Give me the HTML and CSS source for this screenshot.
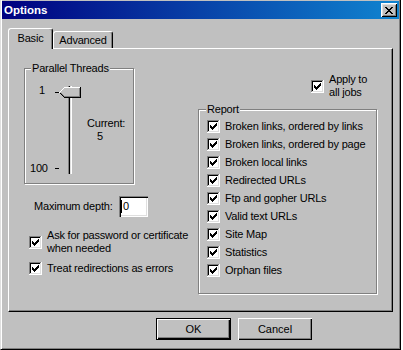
FILE: index.html
```html
<!DOCTYPE html>
<html lang="en">

<head>
    <meta charset="UTF-8">
    <title>Options</title>
    <link rel="stylesheet" href="styles.css">
</head>

<body>
    <!-- shared checkbox picture -->
    <svg class="defs">
        <symbol id="checkbox" viewBox="0 0 13 13">
            <path d="M0 0h12v1H1v11H0z" fill="#808080" />
            <path d="M1 1h10v1H2v9H1z" fill="#000" />
            <path d="M12 0h1v13H0v-1h12z" fill="#fff" />
            <path d="M11 1h1v11H1v-1h10z" fill="#dfdfdf" />
            <path d="M2 2h9v9H2z" fill="#fff" />
            <path d="M3 5h1v3H3zM4 6h1v3H4zM5 7h1v3H5zM6 6h1v3H6zM7 5h1v3H7zM8 4h1v3H8zM9 3h1v3H9z" fill="#000" />
        </symbol>
    </svg>

    <div class="window">
        <div class="titlebar">
            <span class="title">Options</span>
            <span class="close-btn">
                <svg width="8" height="7" viewBox="0 0 8 7" shape-rendering="crispEdges">
                    <path d="M0 0h2v1H0zM6 0h2v1H6zM1 1h2v1H1zM5 1h2v1H5zM2 2h4v1H2zM3 3h2v1H3zM2 4h4v1H2zM1 5h2v1H1zM5 5h2v1H5zM0 6h2v1H0zM6 6h2v1H6z" fill="#000" />
                </svg>
            </span>
        </div>

        <div class="tabs">
            <div class="tab tab-active">Basic</div>
            <div class="tab">Advanced</div>
        </div>

        <div class="panel">
            <div class="col-left">
                <div class="group threads">
                    <div class="group-title">Parallel Threads</div>
                    <div class="slider-row">
                        <div class="scale">
                            <span class="scale-min">1</span>
                            <span>100</span>
                        </div>
                        <svg class="slider" width="30" height="92" viewBox="0 0 30 92" shape-rendering="crispEdges">
                            <rect x="2" y="8" width="4" height="1" fill="#000" />
                            <rect x="2" y="84" width="4" height="1" fill="#000" />
                            <rect x="15" y="2" width="1" height="88" fill="#808080" />
                            <rect x="16" y="2" width="1" height="88" fill="#000" />
                            <rect x="17" y="2" width="1" height="88" fill="#dfdfdf" />
                            <rect x="18" y="2" width="1" height="88" fill="#fff" />
                            <path d="M11 3H28V14H11V13H10V12H9V11H8V10H7V9H6V8H7V7H8V6H9V5H10V4H11Z" fill="#c0c0c0" />
                            <path d="M6 8h1v1H6zM7 7h1v1H7zM8 6h1v1H8zM9 5h1v1H9zM10 4h1v1h-1zM11 3h16v1H11z" fill="#fff" />
                            <path d="M26 4h1v8h-1zM11 12h16v1H11zM8 9h1v1H8zM9 10h1v1H9zM10 11h1v1h-1z" fill="#808080" />
                            <path d="M27 3h1v11h-1zM11 13h17v1H11zM7 9h1v1H7zM8 10h1v1H8zM9 11h1v1H9zM10 12h1v1h-1z" fill="#000" />
                        </svg>
                        <div class="current">Current:<br><span class="current-value">5</span></div>
                    </div>
                </div>

                <div class="depth-row">
                    <span class="depth-label">Maximum depth:</span>
                    <span class="edit"><span class="caret"></span>0</span>
                </div>

                <div class="check-row ask">
                    <svg class="check"><use href="#checkbox" /></svg>
                    <span>Ask for password or certificate<br>when needed</span>
                </div>
                <div class="check-row treat">
                    <svg class="check"><use href="#checkbox" /></svg>
                    <span>Treat redirections as errors</span>
                </div>
            </div>

            <div class="col-right">
                <div class="check-row apply">
                    <svg class="check"><use href="#checkbox" /></svg>
                    <span>Apply to<br>all jobs</span>
                </div>

                <div class="group report">
                    <div class="group-title report-title">Report</div>
                    <div class="report-list">
                        <div class="check-row"><svg class="check"><use href="#checkbox" /></svg><span>Broken links, ordered by links</span></div>
                        <div class="check-row"><svg class="check"><use href="#checkbox" /></svg><span>Broken links, ordered by page</span></div>
                        <div class="check-row"><svg class="check"><use href="#checkbox" /></svg><span>Broken local links</span></div>
                        <div class="check-row"><svg class="check"><use href="#checkbox" /></svg><span>Redirected URLs</span></div>
                        <div class="check-row"><svg class="check"><use href="#checkbox" /></svg><span>Ftp and gopher URLs</span></div>
                        <div class="check-row"><svg class="check"><use href="#checkbox" /></svg><span>Valid text URLs</span></div>
                        <div class="check-row"><svg class="check"><use href="#checkbox" /></svg><span>Site Map</span></div>
                        <div class="check-row"><svg class="check"><use href="#checkbox" /></svg><span>Statistics</span></div>
                        <div class="check-row"><svg class="check"><use href="#checkbox" /></svg><span>Orphan files</span></div>
                    </div>
                </div>
            </div>
        </div>

        <div class="buttons">
            <button class="btn btn-default">OK</button>
            <button class="btn">Cancel</button>
        </div>
    </div>
</body>

</html>
```

FILE: styles.css
```css
body {
    margin: 0;
    background-color: #fff;
    font-family: "Liberation Sans", Arial, sans-serif;
    font-size: 11px;
    letter-spacing: -0.2px;
    line-height: 13px;
    color: #000;
}

.defs {
    display: none;
}

.window {
    width: 401px;
    height: 350px;
    box-sizing: border-box;
    background-color: #c0c0c0;
    border-left: 1px solid #dfdfdf;
    border-right: 1px solid #000;
    border-bottom: 1px solid #000;
    padding: 1px 1px 0 1px;
    box-shadow: inset 1px 0 #fff, inset -1px -1px #808080;
}

/* title bar */
.titlebar {
    display: flex;
    align-items: center;
    justify-content: space-between;
    height: 18px;
    padding: 0 2px 0 2px;
    background: linear-gradient(to right, #000080, #1084d0);
}

.title {
    color: #fff;
    font-weight: bold;
    font-size: 11.5px;
    letter-spacing: 0;
}

.close-btn {
    width: 16px;
    height: 14px;
    box-sizing: border-box;
    display: flex;
    align-items: center;
    justify-content: center;
    background-color: #c0c0c0;
    box-shadow: inset 1px 1px #fff, inset -1px -1px #000, inset 2px 2px #dfdfdf, inset -2px -2px #808080;
}

/* tabs */
.tabs {
    display: flex;
    align-items: flex-end;
    margin: 9px 0 0 6px;
}

.tab {
    box-sizing: border-box;
    width: 60px;
    height: 17px;
    padding-top: 2px;
    text-align: center;
    background-color: #c0c0c0;
    border-top: 1px solid #fff;
    border-left: 1px solid #fff;
    border-right: 1px solid #000;
    border-radius: 3px 3px 0 0;
    box-shadow: inset -1px 0 #808080;
}

.tab-active {
    width: 45px;
    height: 21px;
    padding-top: 3px;
    margin-bottom: -1px;
    position: relative;
    z-index: 1;
}

/* panel */
.panel {
    box-sizing: border-box;
    width: 385px;
    height: 264px;
    margin-left: 6px;
    padding-left: 15px;
    display: flex;
    border: 1px solid;
    border-color: #fff #000 #000 #fff;
    box-shadow: inset -1px -1px #808080;
}

.col-left {
    width: 174px;
    display: flex;
    flex-direction: column;
}

.col-right {
    width: 179px;
    display: flex;
    flex-direction: column;
}

.group {
    box-sizing: border-box;
    border: 1px solid #808080;
    box-shadow: inset 1px 1px #fff, 1px 1px #fff;
}

.group-title {
    display: table;
    margin: -7px 0 0 6px;
    padding: 0 1px;
    background-color: #c0c0c0;
}

/* parallel threads */
.threads {
    width: 110px;
    height: 116px;
    margin-top: 19px;
}

.slider-row {
    display: flex;
    margin-top: 9px;
}

.scale {
    box-sizing: border-box;
    width: 28px;
    height: 91px;
    padding-left: 5px;
    display: flex;
    flex-direction: column;
    justify-content: space-between;
    align-items: flex-start;
}

.scale-min {
    margin-left: 9px;
}

.slider {
    flex-shrink: 0;
}

.current {
    margin: 33px 0 0 4px;
}

.current-value {
    padding-left: 10px;
}

/* depth */
.depth-row {
    display: flex;
    align-items: center;
    margin-top: 12px;
}

.depth-label {
    box-sizing: border-box;
    width: 95px;
    padding-left: 10px;
}

.edit {
    box-sizing: border-box;
    width: 29px;
    height: 21px;
    padding-left: 2px;
    display: flex;
    align-items: center;
    background-color: #fff;
    box-shadow: inset 1px 1px #808080, inset 2px 2px #000, inset -1px -1px #fff, inset -2px -2px #dfdfdf;
}

.caret {
    width: 1px;
    height: 13px;
    margin-right: 1px;
    background-color: #000;
}

/* checkboxes */
.check-row {
    display: flex;
    align-items: center;
    gap: 5px;
    padding-left: 5px;
}

.check {
    width: 13px;
    height: 13px;
    flex-shrink: 0;
}

.ask {
    margin-top: 12px;
}

.treat {
    margin-top: 7px;
}

.apply {
    margin-top: 24px;
    padding-left: 113px;
}

/* report */
.report {
    width: 179px;
    height: 185px;
    margin-top: 10px;
}

.report-title {
    margin-left: 7px;
}

.report-list {
    display: flex;
    flex-direction: column;
    margin-top: 1px;
}

.report-list .check-row {
    height: 18px;
    padding-left: 8px;
}

/* buttons */
.buttons {
    display: flex;
    gap: 7px;
    margin-top: 6px;
    padding-left: 154px;
}

.btn {
    box-sizing: border-box;
    width: 74px;
    height: 22px;
    padding: 0;
    border: none;
    background-color: #c0c0c0;
    font: inherit;
    color: #000;
    box-shadow: inset 1px 1px #fff, inset -1px -1px #000, inset -2px -2px #808080;
}

.btn-default {
    width: 75px;
    border: 1px solid #000;
}
```
